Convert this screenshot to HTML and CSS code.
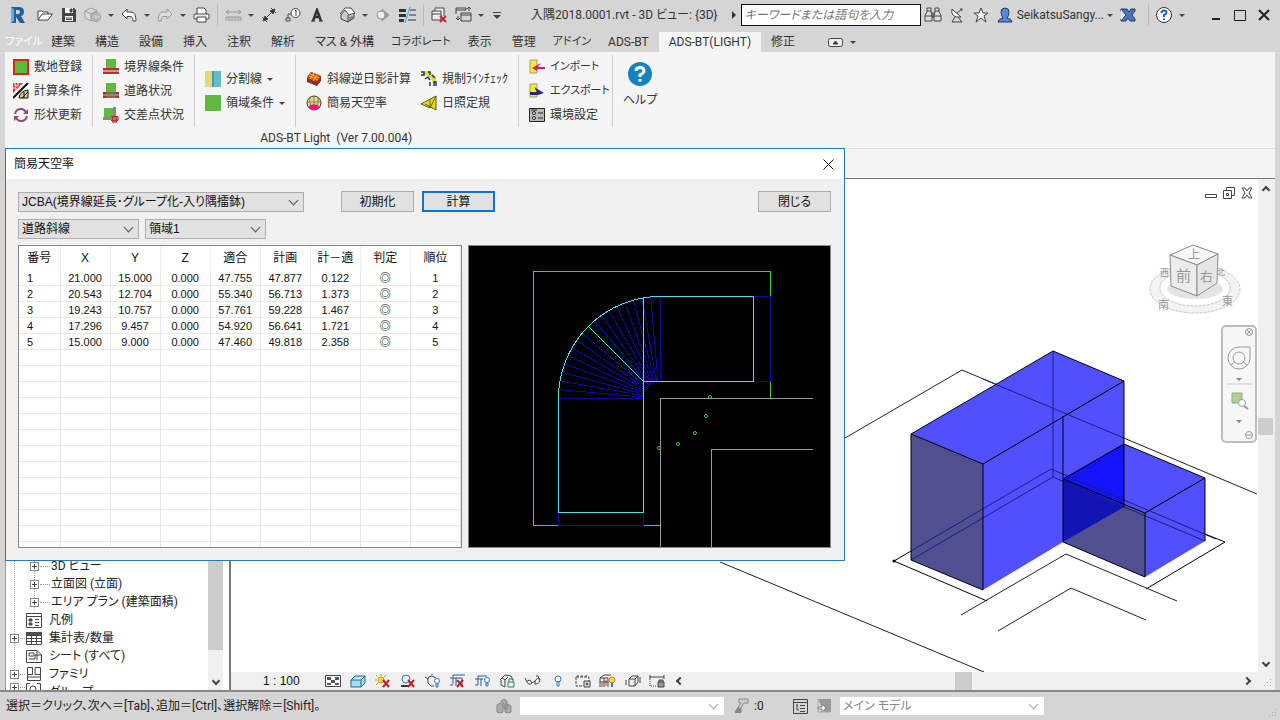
FILE: index.html
```html
<!DOCTYPE html>
<html lang="ja">
<head>
  <meta charset="UTF-8" />
  <meta name="viewport" content="width=device-width, initial-scale=1.0"/>
  <title>入隅2018.0001.rvt - 3D ビュー: {3D}</title>
  <link rel="stylesheet" href="styles.css">
</head>
<body>
  <header class="titlebar">
    <span class="app-logo"><svg width="18" height="18" viewBox="0 0 18 18"><path d="M3 1H11Q16 1 16 6Q16 9 13 10L17 17H12L8 11V17H3Z" fill="#1f5f9e"/><path d="M3 1L6 3V15L3 17Z" fill="#69a8dc"/><path d="M8 4H10Q12 4 12 6Q12 8 10 8H8Z" fill="#d5d5d5"/></svg></span>
    <button class="tool" aria-label="開く"><svg width="16" height="16" viewBox="0 0 16 16" class="line"><path d="M1 13V4H5L6 5H11V7M1 13L5 7H15.500L11 13Z" fill="#fff"/></svg></button>
    <button class="tool" aria-label="保存"><svg width="16" height="16" viewBox="0 0 16 16"><path d="M1 1H13L15 3V15H1Z" fill="#444"/><path d="M4 1H12V6H4ZM4 9H12V14H4Z" fill="#fff"/><path d="M9 2H11V5H9ZM5 11H11M5 12.500H11" stroke="#444" fill="#444"/></svg></button>
    <button class="tool" aria-label="同期"><svg width="18" height="16" viewBox="0 0 18 16" class="muted"><path d="M1 4L7 1L13 4V11L7 14L1 11ZM1 4L7 7L13 4M7 7V14" fill="#ddd"/><circle cx="12" cy="10" r="4.500" fill="#ccc"/><path d="M10 10A2 2 0 0 1 14 9M14 11A2 2 0 0 1 10 11"/></svg></button>
    <button class="drop" aria-label="同期メニュー"></button>
    <button class="tool" aria-label="元に戻す"><svg width="16" height="14" viewBox="0 0 16 14" class="line"><path d="M1 6L6 1V4H10Q15 4 15 13H12Q12 8.500 9 8.500H6V11Z" fill="#fff"/></svg></button>
    <button class="drop" aria-label="元に戻すメニュー"></button>
    <button class="tool" aria-label="やり直し"><svg width="16" height="14" viewBox="0 0 16 14" class="muted"><path d="M15 6L10 1V4H6Q1 4 1 13H4Q4 8.500 7 8.500H10V11Z" fill="#ddd"/></svg></button>
    <button class="drop" aria-label="やり直しメニュー"></button>
    <button class="tool" aria-label="印刷"><svg width="17" height="16" viewBox="0 0 17 16" class="line"><path d="M4 7V1H11L13 3V7" fill="#fff"/><rect x="1" y="7" width="15" height="5" rx="1" fill="#eee"/><path d="M4 10H13V15H4Z" fill="#fff"/></svg></button>
    <span class="sep"></span>
    <button class="tool" aria-label="計測"><svg width="17" height="12" viewBox="0 0 17 12" class="muted"><path d="M1 3H16M4 1L1 3L4 5M13 1L16 3L13 5M1 8H16V11H1ZM4 8V10M7 8V10M10 8V10M13 8V10"/></svg></button>
    <button class="drop" aria-label="計測メニュー"></button>
    <button class="tool" aria-label="寸法"><svg width="16" height="16" viewBox="0 0 16 16" class="line"><path d="M3 13L13 3M1 10L6 15M10 1L15 6"/><path d="M2 14L4 9L7 12ZM14 2L9 4L12 7Z" fill="#333"/></svg></button>
    <button class="tool" aria-label="タグ"><svg width="16" height="14" viewBox="0 0 16 14" class="line"><circle cx="10.500" cy="5" r="4.500" fill="#fff"/><path d="M6 6H3V10M10 3L11 2V8M1 10H5V13H1Z"/></svg></button>
    <button class="tool" aria-label="文字"><svg width="14" height="14" viewBox="0 0 14 14"><path d="M3 13L7 2L11 13M4 9H10" fill="none" stroke="#333" stroke-width="2.500"/><path d="M1 13H5M9 13H13" stroke="#333" stroke-width="1"/></svg></button>
    <button class="tool spaced" aria-label="3D ビュー"><svg width="17" height="16" viewBox="0 0 17 16" class="line"><path d="M2 7V12L9 15L15 11V6" fill="#ccc"/><path d="M1 7L6 1H12L16 6L10 8L6 3L2 8" fill="#fff"/><path d="M9 8V15M11 10V13.500M13 9V12"/></svg></button>
    <button class="drop" aria-label="3D ビューメニュー"></button>
    <button class="tool" aria-label="断面"><svg width="16" height="14" viewBox="0 0 16 14" class="muted"><path d="M7 1L14 7L7 13Z" fill="#999"/><circle cx="6" cy="7" r="4" fill="#eee"/></svg></button>
    <button class="tool" aria-label="細線"><svg width="17" height="16" viewBox="0 0 17 16"><path d="M0 2H7V5H0ZM0 7H7V10H0ZM0 12H5V15H0Z" fill="#333"/><path d="M11 3H17M10 8H17M9 13H17" stroke="#333"/><path d="M11 0L6 16" stroke="#35a0e0"/></svg></button>
    <span class="sep"></span>
    <button class="tool" aria-label="非表示を閉じる"><svg width="16" height="16" viewBox="0 0 16 16" class="line"><path d="M4 4V1H13V9M1 4H10V13H1ZM1 7H10" fill="#eee"/><path d="M9 9L15 15M15 9L9 15" stroke="#c3272d" stroke-width="2"/></svg></button>
    <button class="tool" aria-label="ウィンドウ切り替え"><svg width="17" height="16" viewBox="0 0 17 16" class="line"><path d="M1 7V1H11V3M1 3H11M6 6H16V14H6ZM6 8H16M14 4V1M12 2L14 0L16 2M3 9V13M1 11L3 13L5 11"/></svg></button>
    <button class="drop" aria-label="ウィンドウメニュー"></button>
    <button class="drop wide" aria-label="クイックアクセスのカスタマイズ"></button>
    <h1 class="doc-title">入隅2018.0001.rvt - 3D ビュー: {3D}</h1>
    <span class="expand"></span>
    <input class="search" type="text" aria-label="検索" placeholder="キーワードまたは語句を入力">
    <button class="tool" aria-label="検索する"><svg width="18" height="16" viewBox="0 0 18 16" class="line"><path d="M3 1H7V5L8 8V14H1V8L3 5ZM11 1H15V5L17 8V14H10V8L11 5ZM8 6H10V10H8ZM1 9H8M10 9H17M3 4H7M11 4H15" fill="#ddd"/></svg></button>
    <button class="tool" aria-label="通信センター"><svg width="16" height="16" viewBox="0 0 16 16" class="line"><path d="M3 2Q1 11 12 10Z" fill="#fff"/><path d="M8 6L13 2M11 2H13V4M6 10L3 15H13L9 10"/></svg></button>
    <button class="tool" aria-label="お気に入り"><svg width="16" height="16" viewBox="0 0 16 16" class="line"><path d="M8 1L10 6H15L11 9L13 15L8 11L3 15L5 9L1 6H6Z" fill="#f4f4f4"/></svg></button>
    <button class="tool" aria-label="サインイン"><svg width="16" height="16" viewBox="0 0 16 16"><path d="M1 15Q1 12 6 11Q4 8 4 5Q4 1 8 1Q12 1 12 5Q12 8 10 11Q15 12 15 15Z" fill="#5d86d6" stroke="#27386b"/></svg></button>
    <a class="user" href="#">SeikatsuSangy...</a>
    <button class="drop" aria-label="アカウントメニュー"></button>
    <button class="tool exchange" aria-label="Exchange"><svg width="16" height="14" viewBox="0 0 16 14"><path d="M1 1H7L9 4L11 1H15V3L12 7L15 11V13H10L8 10L6 13H1V11L4 7L1 3Z" fill="#4d74c0" stroke="#27386b"/><path d="M1 1L6 7L1 13" fill="#dfe8f8" stroke="#27386b"/></svg></button>
    <span class="sep"></span>
    <button class="tool" aria-label="ヘルプ"><svg width="18" height="18" viewBox="0 0 18 18"><circle cx="9" cy="9" r="7.500" fill="#fff" stroke="#333"/><path d="M6.500 7Q6.500 4.500 9 4.500Q11.500 4.500 11.500 6.500Q11.500 8 9 9V11M9 12.500V14" fill="none" stroke="#1f62c4" stroke-width="2"/></svg></button>
    <button class="drop" aria-label="ヘルプメニュー"></button>
    <span class="window-buttons">
      <button class="tool" aria-label="最小化"><svg width="12" height="12" viewBox="0 0 12 12"><path d="M2 10H10" stroke="#222" stroke-width="2"/></svg></button>
      <button class="tool" aria-label="最大化"><svg width="12" height="12" viewBox="0 0 12 12"><path d="M.500 1.500H11.500V11.500H.500Z" fill="none" stroke="#222"/></svg></button>
      <button class="tool" aria-label="閉じる"><svg width="12" height="12" viewBox="0 0 12 12"><path d="M1 1L11 11M11 1L1 11" stroke="#222" stroke-width="2"/></svg></button>
    </span>
  </header>

  <nav class="tabs">
    <a class="file" href="#">ファイル</a>
    <a href="#">建築</a>
    <a href="#">構造</a>
    <a href="#">設備</a>
    <a href="#">挿入</a>
    <a href="#">注釈</a>
    <a href="#">解析</a>
    <a href="#">マス &amp; 外構</a>
    <a class="kana" href="#">コラボレート</a>
    <a href="#">表示</a>
    <a href="#">管理</a>
    <a class="kana" href="#">アドイン</a>
    <a href="#">ADS-BT</a>
    <a class="active" href="#">ADS-BT(LIGHT)</a>
    <a href="#">修正</a>
    <button class="tool ribbon-toggle" aria-label="リボンの表示"><svg width="15" height="9" viewBox="0 0 15 9" class="line"><rect x=".500" y=".500" width="14" height="8" rx="2" fill="#eee"/><path d="M5 6L7.500 3L10 6Z" fill="#333"/></svg></button>
    <button class="drop" aria-label="リボンメニュー"></button>
  </nav>

  <section class="ribbon">
    <div class="panel">
      <div class="groups">
        <div class="group">
          <button><svg width="16" height="16" viewBox="0 0 16 16"><rect x="1" y="1" width="14" height="14" fill="#5abe3d" stroke="#e0251b" stroke-width="2"/></svg>敷地登録</button>
          <button><svg width="16" height="16" viewBox="0 0 16 16"><path d="M0 0H10L0 10Z" fill="#e5322c"/><path d="M2 0V3H5V0M0 5H3V8M7 2L9 4" stroke="#fff" fill="none"/><path d="M0 15L15 0" stroke="#111" stroke-width="2"/><path d="M6 15Q7 8 15 7V15Z" fill="#d9cf84" stroke="#111"/><path d="M9 15L15 9M11 9V15" stroke="#111"/></svg>計算条件</button>
          <button><svg width="16" height="16" viewBox="0 0 16 16"><path d="M2 7Q3 2 8 2Q11 2 13 5M14 9Q13 14 8 14Q5 14 3 11" fill="none" stroke="#8f4b73" stroke-width="2"/><path d="M15 2V7H10ZM1 14V9H6Z" fill="#8f4b73"/></svg>形状更新</button>
        </div>
        <div class="group">
          <button><svg width="16" height="16" viewBox="0 0 16 16"><path d="M3 0H13V9H3Z" fill="#5abe3d"/><path d="M0 9H16V11H0ZM0 13H16V15H0Z" fill="#cf2230"/><path d="M0 11H16V13H0Z" fill="#aaa"/></svg>境界線条件</button>
          <button><svg width="16" height="16" viewBox="0 0 16 16"><path d="M3 0H13V9H3Z" fill="#5abe3d"/><path d="M0 9H16V15H0Z" fill="#888"/><path d="M2 10H14M2 14H14" stroke="#c22"/><path d="M0 9H3V11H0ZM13 9H16V11H13ZM0 13H3V15H0ZM13 13H16V15H13Z" fill="#c22"/></svg>道路状況</button>
          <button><svg width="16" height="16" viewBox="0 0 16 16"><path d="M1 1H10V10H1Z" fill="#5abe3d"/><path d="M0 10H16V13H0ZM10 0H13V16H10Z" fill="#888"/><path d="M9.500 9V15.500M13.500 9V15.500M8 9.500H15M8 13.500H15" stroke="#c22"/></svg>交差点状況</button>
        </div>
        <div class="group center">
          <button><svg width="16" height="16" viewBox="0 0 16 16"><path d="M0 0H7V16H0Z" fill="#e2d67e"/><path d="M7 0H16V16H7Z" fill="#5fc0be"/><path d="M7 0H9V16H7Z" fill="#5790c0"/></svg>分割線<i></i></button>
          <button><svg width="16" height="16" viewBox="0 0 16 16"><path d="M0 0H16V16H0Z" fill="#5fb942"/></svg>領域条件<i></i></button>
        </div>
        <div class="group center double">
          <button><svg width="16" height="16" viewBox="0 0 16 16"><path d="M5 1L15 5V10L11 15L1 11V6Z" fill="#7b3325"/><path d="M5 1L15 5L11 11L1 7Z" fill="#ef3c16"/><path d="M4 3L13 7M3 5L12 9M8 2L4 8M11 4L7 10" stroke="#f3cc2e"/></svg>斜線逆日影計算</button>
          <button><svg width="16" height="16" viewBox="0 0 16 16"><circle cx="8" cy="8" r="7" fill="#dedb85" stroke="#333"/><path d="M3 13Q3 9 6 10Q8 8 10 10Q13 9 13 13Q8 17 3 13Z" fill="#ed1689"/><path d="M8 1V10M1 7H15M4 3Q3 8 5 10M12 3Q13 8 11 10" fill="none" stroke="#8a884f"/></svg>簡易天空率</button>
          <button><svg width="16" height="16" viewBox="0 0 16 16"><path d="M2 3L7 2L12 6L14 12" stroke="#e9dc19" stroke-width="4" fill="none"/><path d="M0 1H3V4H0M7 1H9V4M4 8L7 6L9 9M9 15V11M13 15V11H15V15M11 4L14 7" fill="none" stroke="#23337a" stroke-width="1.500"/></svg>規制ﾗｲﾝﾁｪｯｸ</button>
          <button><svg width="16" height="16" viewBox="0 0 16 16"><path d="M0 9L15 1V15Z" fill="#e5dc18"/><path d="M0 9L15 1L9 13ZM15 1V15L4 9M9 5V13" fill="none" stroke="#5e5b19"/></svg>日照定規</button>
        </div>
        <div class="group kana">
          <button><svg width="16" height="16" viewBox="0 0 16 16"><path d="M1 1H8V14H1Z" fill="#ffed1d" stroke="#999"/><path d="M16 10H8V12L3 9L12 4L9 8H16Z" fill="#d61a73"/></svg>インポート</button>
          <button><svg width="16" height="16" viewBox="0 0 16 16"><path d="M1 1H8V14H1Z" fill="#ffed1d" stroke="#999"/><path d="M1 9H8L5 4L15 10L9 12H1Z" fill="#25287f"/></svg>エクスポート</button>
          <button><svg width="16" height="16" viewBox="0 0 16 16"><path d="M.500 1.500H15.500V14.500H.500Z" fill="#bbb" stroke="#222"/><path d="M9 6H14M9 11H14M2 3H8" stroke="#222"/><circle cx="5" cy="6" r="1.500" fill="#eee" stroke="#222"/><circle cx="5" cy="11" r="1.500" fill="#eee" stroke="#222"/></svg><span class="label">環境設定</span></button>
        </div>
        <div class="group help">
          <button><svg width="24" height="24" viewBox="0 0 24 24"><circle cx="12" cy="12" r="12" fill="#1583bd"/><path d="M8 9Q8 5.500 12 5.500Q16 5.500 16 9Q16 11 12 13V15M12 17V19.500" fill="none" stroke="#fff" stroke-width="3"/></svg>ヘルプ</button>
        </div>
      </div>
      <div class="panel-title">ADS-BT Light&nbsp; (Ver 7.00.004)</div>
    </div>
  </section>
  <div class="options-bar"></div>

  <main class="workspace">
    <aside class="browser">
      <ul class="tree">
        <li class="child"><b></b>3D ビュー</li>
        <li class="child"><b></b>立面図 (立面)</li>
        <li class="child"><b></b>エリア プラン (建築面積)</li>
        <li class="leaf"><svg width="16" height="15" viewBox="0 0 16 15" class="line"><path d="M.500 .500H15.500V14.500H.500ZM.500 3.500H15.500M9 6.500H13M9 9.500H13M9 12.500H13"/><path d="M3 6H6V8H3ZM3 10H6V12H3Z" fill="#555"/></svg>凡例</li>
        <li><b></b><svg width="16" height="13" viewBox="0 0 16 13" class="line"><path d="M.500 .500H15.500V12.500H.500ZM.500 3.500H15.500M.500 6.500H15.500M.500 9.500H15.500M5.500 3V12M10.500 3V12"/><path d="M0 0H16V3H0Z" fill="#555"/></svg>集計表/数量</li>
        <li class="leaf"><svg width="16" height="13" viewBox="0 0 16 13" class="line"><path d="M.500 .500H11L15.500 5V12.500H.500ZM3 3H8V6H3ZM3 9H9V5H11V10M11 1V5H15"/></svg>シート (すべて)</li>
        <li><b></b><svg width="16" height="14" viewBox="0 0 16 14" class="line"><path d="M1.500 .500H6.500V7.500H1.500ZM9 .500H14.500V7.500H9ZM1.500 10H14.500M1.500 7.500V13.500H14.500V7.500"/></svg>ファミリ</li>
        <li class="cut"><b></b><svg width="16" height="14" viewBox="0 0 16 14" class="line"><path d="M4 .500H.500V13.500M11 .500H14.500V13.500"/><circle cx="7" cy="6" r="3"/></svg>グループ</li>
      </ul>
      <div class="scroll-y browser-scroll"><span class="thumb"></span><span class="chev down"></span></div>
    </aside>

    <div class="view">
      <div class="canvas">
        <svg class="model" viewBox="231 179 1027 493" preserveAspectRatio="xMaxYMin meet">
          <g fill="none" stroke="#222" stroke-width="1">
            <path d="M720 562L984 672M845 438L962 370L1257 494"/>
            <path d="M961 615L1066 554L1177 601M998 631L1071 588L1146 620"/>
          </g>
          <path d="M911 434L1053 351L1124 381V507L1063 542L983 590V464Z" fill="#5050ff"/>
          <path d="M911 434L983 464V590L911 560Z" fill="#505090"/>
          <path d="M1124 444L1205 478V541L1145 577V513L1063 479Z" fill="#5050ff"/>
          <path d="M1063 479L1145 513V577L1063 542Z" fill="#505090"/>
          <path d="M1063 479L1124 444V507Z" fill="#1414ff"/>
          <path d="M1063 479L1124 507L1063 542Z" fill="#1414b4"/>
          <g fill="none" stroke="#1c1c80">
            <path d="M1053 351V477L911 560M1053 477L1205 541M911 551L1051 469L1216 539M983 379L1124 438"/>
          </g>
          <g fill="none" stroke="#000" stroke-width="1">
            <path d="M911 434L1053 351L1124 381V507M911 434L983 464L1124 381M911 434V560L983 590V464M1063 416V542L1145 577V513L1063 479L1124 444L1205 478L1145 513M1205 478V541"/>
            <path d="M911 551L894 561L987 601M1205 534L1225 542L1146 589"/>
          </g>
          <circle cx="894" cy="561" r="1.500"/>
        </svg>
        <div class="mdi">
          <button aria-label="ビューを最小化"><svg width="12" height="12" viewBox="0 0 12 12" class="line"><path d="M.500 7.500H11.500V10.500H.500Z" fill="#fff"/></svg></button>
          <button aria-label="ビューを元に戻す"><svg width="12" height="12" viewBox="0 0 12 12" class="line"><path d="M3.500 3V.500H11.500V8.500H9M.500 3.500H8.500V11.500H.500ZM3.500 6.500H5.500V8.500H3.500Z" fill="#fff"/></svg></button>
          <button aria-label="ビューを閉じる"><svg width="12" height="12" viewBox="0 0 12 12" class="line"><path d="M1 1H4L6 4L8 1H11L8 6L11 11H8L6 8L4 11H1L4 6Z" fill="#fff"/></svg></button>
        </div>
        <svg class="viewcube" width="92" height="74" viewBox="0 0 92 74">
          <ellipse cx="46" cy="45" rx="45" ry="24" fill="#f3f3f3" stroke="#c6c6c6" stroke-dasharray="3 1"/>
          <ellipse cx="46" cy="44" rx="35" ry="18" fill="#fff" stroke="#c6c6c6" stroke-dasharray="3 1"/>
          <ellipse cx="46" cy="45" rx="28" ry="10" fill="#e4e4e4"/>
          <g class="cube-text">
            <text x="11" y="32" font-size="9">西</text>
            <text x="68" y="31" font-size="8">北</text>
            <text x="9" y="65" font-size="11">南</text>
            <text x="73" y="61" font-size="11">東</text>
          </g>
          <path d="M21 11L44 1L69 10L48 21Z" fill="#f7f7f7" stroke="#8a8a8a"/>
          <path d="M21 11L48 21V52L22 42Z" fill="#ececec" stroke="#8a8a8a"/>
          <path d="M69 10L48 21V52L68 39Z" fill="#e6e6e6" stroke="#8a8a8a"/>
          <g class="cube-text">
            <text x="39" y="15" font-size="12">上</text>
            <text x="27" y="37" font-size="15">前</text>
            <text x="51" y="37" font-size="13">右</text>
          </g>
        </svg>
        <div class="navbar">
          <svg width="32" height="114" viewBox="1 0 32 114" fill="none" stroke="#999">
            <circle cx="27" cy="5" r="3.500"/><path d="M25 3L29 7M29 3L25 7"/>
            <path d="M17 20H28V31A11 11 0 1 1 17 20Z"/><circle cx="17" cy="31" r="6"/><path d="M9 38L13 35M25 38L21 35"/>
            <path d="M14 51H20L17 54ZM14 93H20L17 96Z" fill="#888" stroke="none"/>
            <path d="M5 57H30" stroke="#ccc"/>
            <path d="M10 66H20V76H10Z" fill="#b2ce9c" stroke="#8fad7c"/><circle cx="20" cy="76" r="3.500" fill="#fff"/><path d="M22 79L26 82" stroke-width="2"/>
            <circle cx="27" cy="108" r="3.500"/><path d="M24 108H30"/>
          </svg>
        </div>
      </div>
      <div class="scroll-y view-scroll"><span class="chev up"></span><span class="thumb"></span><span class="chev down"></span></div>
      <div class="view-bar">
        <span class="scale">1 : 100</span>
        <button aria-label="詳細レベル"><svg width="16" height="12" viewBox="0 0 16 12"><path d="M.500 .500H15.500V11.500H.500Z" fill="#fff" stroke="#444"/><path d="M2 2H6V5H2ZM10 2H14V5H10ZM6 5H10V8H6ZM2 8H6V10H2ZM10 8H14V10H10Z" fill="#555"/></svg></button>
        <button aria-label="表示スタイル"><svg width="16" height="13" viewBox="0 0 16 13"><path d="M1 5L5 1H15V8L11 12H1ZM1 5H11L15 1M11 5V12" fill="#a8dbf4" stroke="#1b6d9c"/></svg></button>
        <button aria-label="太陽の位置"><svg width="16" height="14" viewBox="0 0 16 14"><circle cx="6" cy="6" r="3" fill="#ffd83b" stroke="#c99a12"/><path d="M6 0V2M1 1L2.500 2.500M0 6H2M1 11L3 9M11 1L9 3" stroke="#c99a12"/><path d="M8 6L14 13M14 6L8 13" stroke="#b8202a" stroke-width="2"/></svg></button>
        <button aria-label="影"><svg width="16" height="14" viewBox="0 0 16 14"><circle cx="6" cy="5" r="4" fill="#e7f2fb" stroke="#2d79bd"/><path d="M1 12H8" stroke="#333" stroke-width="2"/><path d="M8 6L14 13M14 6L8 13" stroke="#b8202a" stroke-width="2"/></svg></button>
        <button aria-label="レンダリング"><svg width="17" height="14" viewBox="0 0 17 14" class="line"><path d="M1 3L4 5Q4 2 8 2L12 4M4 5V9L7 12H10M7 0H9" fill="#eee"/><circle cx="13" cy="7" r="2.500" stroke="#2d79bd" fill="#fff"/><path d="M12 10H14V13H12Z" stroke="#2d79bd"/></svg></button>
        <button aria-label="トリミング"><svg width="17" height="14" viewBox="0 0 17 14"><path d="M4 1H16M4 1V10M1 4H13V13M1 11H4M7 4V12" fill="none" stroke="#2d5f93"/><path d="M8 6L14 13M14 6L8 13" stroke="#b8202a" stroke-width="2"/></svg></button>
        <button aria-label="トリミング領域"><svg width="17" height="14" viewBox="0 0 17 14" fill="none" stroke="#2d5f93"><path d="M4 11V2H13M1 5H9M7 5V12M1 11H4"/><circle cx="13" cy="6" r="2.500" stroke="#2d79bd" fill="#fff"/><path d="M12 9H14V12H12Z" stroke="#2d79bd"/></svg></button>
        <button aria-label="3D ビューのロック"><svg width="17" height="14" viewBox="0 0 17 14" class="line"><path d="M1 6L6 1L12 2L14 6M2 6V11L6 13V6L3 4M6 6L9 3" fill="#eee"/><path d="M9 8H15V13H9ZM10 8V5H14V8" stroke="#2b8071"/></svg></button>
        <button aria-label="一時的に非表示"><svg width="17" height="12" viewBox="0 0 17 12" class="line"><path d="M1 3L3 7Q5 11 8 8L6 5L3 6M8 8L11 6Q13 2 16 4Q16 9 11 9V6M12 1H14L15 4"/></svg></button>
        <button aria-label="非表示要素"><svg width="10" height="14" viewBox="0 0 10 14"><circle cx="5" cy="5" r="3" fill="#fff" stroke="#2d79bd"/><path d="M4 8H6V12H4Z" fill="#fff" stroke="#2d79bd"/></svg></button>
        <button aria-label="ビュープロパティ"><svg width="16" height="14" viewBox="0 0 16 14" class="line"><path d="M1 3H14V7M1 3V12H8M3 1V3M7 1V3M11 1V3" stroke-dasharray="3 1"/><path d="M9 7H15V13H9Z" fill="#ddd"/><circle cx="12" cy="10" r="1"/></svg></button>
        <button aria-label="解析モデル"><svg width="17" height="14" viewBox="0 0 17 14" class="line"><path d="M1 4L5 1H12M1 4V13M5 4V13M9 4V13M1 8H9M1 4H9"/><path d="M3 9V13M7 6V12" stroke="#c3272d"/><circle cx="13" cy="6" r="3" fill="#ffd65c" stroke="#c88414"/><path d="M13 9V13" stroke="#2d79bd" stroke-width="2"/></svg></button>
        <button aria-label="変位セット"><svg width="16" height="14" viewBox="0 0 16 14" class="line"><path d="M4 5L7 2H13V8L10 12H4ZM4 5H10L13 2M10 5V12M1 6V11M15 3V9" fill="#eee"/></svg></button>
        <button aria-label="拘束"><svg width="17" height="14" viewBox="0 0 17 14" class="line"><path d="M1 3H15M1 1V5M15 1V5"/><path d="M1 5V12H8" stroke-dasharray="1 1"/><path d="M9 8H15V13H9ZM10 8V6H14V8" fill="#999"/></svg></button>
        <span class="chev left"></span>
        <div class="scroll-x"><span class="thumb"></span></div>
        <span class="chev right"></span>
      </div>
      <span class="grip"></span>
    </div>
  </main>

  <footer class="status">
    <span class="message">選択＝クリック、次へ＝[Tab]、追加＝[Ctrl]、選択解除＝[Shift]。</span>
    <svg class="workset" width="16" height="16" viewBox="0 0 16 16"><path d="M1 7L4 5L7 7V14L4 15L1 14ZM5 3L8 1L11 3V11H8V6L5 4ZM9 8L12 6L15 8V14L12 15L9 14Z" fill="#aaa" stroke="#888"/></svg>
    <span class="pick"><select aria-label="ワークセット" disabled><option></option></select></span>
    <svg class="filter" width="16" height="16" viewBox="0 0 16 16"><path d="M5 1H14V5H10L7 10V14H1L5 8L7 5H5Z" fill="#ccc" stroke="#888"/><path d="M1 14L4 9L7 10V15H1Z" fill="#888"/></svg>
    <span class="count">:0</span>
    <button class="tool" aria-label="デザイン オプション"><svg width="15" height="16" viewBox="0 0 15 16" class="line"><path d="M.500 1.500H14.500V15.500H.500ZM.500 4.500H14.500M7 7.500H12M7 10.500H12M7 13.500H12M3 7H5M4 7V12H6"/></svg></button>
    <button class="tool add" aria-label="オプションに追加"><svg width="14" height="16" viewBox="0 0 14 16"><path d="M1 1H14V14H7Z" fill="#999"/><path d="M1 1V14H13" fill="none" stroke="#aaa"/><path d="M1 9H5V6L9 10L5 14V11H1Z" fill="#eee" stroke="#888"/></svg></button>
    <span class="pick"><select aria-label="モデル" disabled><option>メイン モデル</option></select></span>
    <span class="grip"></span>
  </footer>

  <section class="dialog" role="dialog" aria-labelledby="dialogTitle">
    <div class="dialog-title">
      <h2 id="dialogTitle">簡易天空率</h2>
      <button aria-label="閉じる"><svg width="11" height="11" viewBox="0 0 11 11"><path d="M.500 .500L10.500 10.500M10.500 .500L.500 10.500" stroke="#111"/></svg></button>
    </div>
    <div class="dialog-body">
      <div class="row">
        <span class="pick large"><select aria-label="算定方式"><option>JCBA(境界線延長･グループ化-入り隅擂鉢)</option></select></span>
        <button class="btn reset">初期化</button>
        <button class="btn primary">計算</button>
        <button class="btn close">閉じる</button>
      </div>
      <div class="row">
        <span class="pick"><select aria-label="斜線種別"><option>道路斜線</option></select></span>
        <span class="pick"><select aria-label="領域"><option>領域1</option></select></span>
      </div>
      <div class="results">
        <div class="list">
          <table>
            <thead>
              <tr><th>番号</th><th>X</th><th>Y</th><th>Z</th><th>適合</th><th>計画</th><th>計－適</th><th>判定</th><th>順位</th></tr>
            </thead>
            <tbody>
              <tr><td>1</td><td>21.000</td><td>15.000</td><td>0.000</td><td>47.755</td><td>47.877</td><td>0.122</td><td>◎</td><td>1</td></tr>
              <tr><td>2</td><td>20.543</td><td>12.704</td><td>0.000</td><td>55.340</td><td>56.713</td><td>1.373</td><td>◎</td><td>2</td></tr>
              <tr><td>3</td><td>19.243</td><td>10.757</td><td>0.000</td><td>57.761</td><td>59.228</td><td>1.467</td><td>◎</td><td>3</td></tr>
              <tr><td>4</td><td>17.296</td><td>9.457</td><td>0.000</td><td>54.920</td><td>56.641</td><td>1.721</td><td>◎</td><td>4</td></tr>
              <tr><td>5</td><td>15.000</td><td>9.000</td><td>0.000</td><td>47.460</td><td>49.818</td><td>2.358</td><td>◎</td><td>5</td></tr>
            </tbody>
          </table>
        </div>
        <div class="plan">
          <svg viewBox="469 246 361 301" fill="none">
            <path d="M660 525.500H533.500V271.500H770.500V398" stroke="#4fc84f"/>
            <path d="M813 398.500H660.500V547M813 449.500H711.500V547" stroke="#999"/>
            <g stroke="#0c0ca0">
              <path d="M753 296.500H770.500V381.500H753M558.500 512V525.500H643.500V512M660.500 296V381M643 398A17 17 0 0 1 660 381"/>
              <path id="ray" d="M558.500 398.500H643"/>
              <use href="#ray" transform="rotate(5 660 398)"/>
              <use href="#ray" transform="rotate(10 660 398)"/>
              <use href="#ray" transform="rotate(15 660 398)"/>
              <use href="#ray" transform="rotate(20 660 398)"/>
              <use href="#ray" transform="rotate(25 660 398)"/>
              <use href="#ray" transform="rotate(30 660 398)"/>
              <use href="#ray" transform="rotate(35 660 398)"/>
              <use href="#ray" transform="rotate(40 660 398)"/>
              <use href="#ray" transform="rotate(50 660 398)"/>
              <use href="#ray" transform="rotate(55 660 398)"/>
              <use href="#ray" transform="rotate(60 660 398)"/>
              <use href="#ray" transform="rotate(65 660 398)"/>
              <use href="#ray" transform="rotate(70 660 398)"/>
              <use href="#ray" transform="rotate(75 660 398)"/>
              <use href="#ray" transform="rotate(80 660 398)"/>
              <use href="#ray" transform="rotate(85 660 398)"/>
            </g>
            <path d="M643.500 381.500V512.500H558.500V398A102 102 0 0 1 660 296.500H753.500V381.500H643.500V298M643.500 381.500L588.500 326.500" stroke="#55dcea"/>
            <g class="points" stroke="#4fc84f">
              <circle cx="710" cy="397" r="1.500"/><circle cx="706" cy="416" r="1.500"/><circle cx="695" cy="433" r="1.500"/><circle cx="678" cy="444" r="1.500"/><circle cx="659" cy="448" r="1.500"/>
            </g>
          </svg>
        </div>
      </div>
    </div>
  </section>
</body>
</html>
```
FILE: styles.css
```css
* {
  box-sizing: border-box;
}
body {
  display: flex;
  flex-direction: column;
  min-height: 100vh;
  margin: 0;
  position: relative;
  background: #d5d5d5;
  color: #333;
  font-family: Roboto, 'Noto Sans CJK JP', sans-serif;
  font-size: 12px;
  line-height: 18px;
  font-feature-settings: "palt";
}
button, input, select {
  font: inherit;
  font-feature-settings: inherit;
  color: inherit;
}
button {
  padding: 0;
  border: none;
  background: none;
}
a {
  color: inherit;
  text-decoration: none;
}
svg {
  display: block;
  flex: none;
}
.line {
  fill: none;
  stroke: #444;
}
.muted {
  fill: none;
  stroke: #999;
}

/* title bar */
.titlebar {
  display: flex;
  align-items: center;
  height: 30px;
  padding-right: 4px;
  white-space: nowrap;
}
.app-logo {
  flex: none;
  width: 33px;
  padding-left: 8px;
}
.tool {
  display: flex;
  flex: none;
  align-items: center;
  justify-content: center;
  width: 24px;
  height: 24px;
}
.spaced {
  margin-left: 6px;
}
.exchange {
  margin-right: 4px;
}
.drop {
  display: flex;
  flex: none;
  flex-direction: column;
  align-items: center;
  justify-content: center;
  width: 12px;
  height: 24px;
}
.drop::after, .group i {
  content: "";
  border: 3px solid transparent;
  border-top-color: #444;
  border-bottom: none;
}
.drop.wide {
  width: 20px;
}
.drop.wide::before {
  content: "";
  width: 8px;
  height: 1px;
  margin-bottom: 2px;
  background: #444;
}
.drop.wide::after {
  border-width: 4px 4px 0;
}
.sep {
  flex: none;
  width: 8px;
  height: 22px;
  background: linear-gradient(#bbb, #bbb) center / 1px 100% no-repeat;
}
.doc-title {
  flex: 1;
  margin: 0 0 0 24px;
  font-size: 12px;
  font-weight: normal;
}
.expand {
  margin-right: 5px;
  border: 4px solid transparent;
  border-left-color: #333;
  border-right: none;
}
.search {
  width: 180px;
  height: 22px;
  padding: 0 3px;
  border: 1px solid #111;
  border-radius: 0;
  background: #fff;
}
.search::placeholder {
  color: #777;
  font-style: italic;
}
.user {
  min-width: 84px;
}
.window-buttons {
  display: flex;
  margin-left: 16px;
}

/* ribbon */
.tabs {
  display: flex;
  align-items: flex-end;
  height: 22px;
  padding-left: 5px;
  white-space: nowrap;
}
.tabs a {
  height: 20px;
  padding: 0 10px;
  line-height: 20px;
}
.tabs .file {
  width: 36px;
  padding: 0;
  font-size: 11px;
  color: #fff;
}
.tabs .kana {
  padding: 0 7px;
}
.kana {
  font-size: 11px;
}
.kana .label {
  font-size: 12px;
}
.tabs .active {
  background: #f5f5f5;
}
.ribbon-toggle {
  margin-left: 18px;
}
.tabs .tool, .tabs .drop {
  height: 20px;
}
.ribbon {
  display: flex;
  margin: 0 5px;
  background: #f5f5f5;
}
.groups {
  display: flex;
  height: 72px;
  margin: 3px 0 2px;
}
.group {
  display: grid;
  grid-template-rows: repeat(3, 24px);
  align-content: center;
  padding: 0 10px 0 8px;
  border-right: 1px solid #ccc;
}
.group + .group {
  padding-left: 10px;
}
.group.center {
  grid-template-rows: repeat(2, 24px);
}
.group.double {
  grid-auto-flow: column;
  column-gap: 10px;
}
.group.kana {
  padding-right: 2px;
}
.group button {
  display: flex;
  align-items: center;
  gap: 5px;
  white-space: nowrap;
}
.group.help {
  display: flex;
  align-items: flex-start;
  padding-top: 7px;
  border-right: none;
}
.help button {
  flex-direction: column;
}
.panel-title {
  height: 19px;
  text-align: center;
}
.options-bar {
  height: 31px;
  margin: 0 5px;
  border-top: 1px solid #ddd;
  border-bottom: 1px solid #777;
  background: #f5f5f5;
}

/* workspace */
.workspace {
  display: flex;
  flex: 1;
  min-height: 511px;
  margin: 0 5px;
}
.browser {
  display: flex;
  width: 226px;
  padding-right: 6px;
  border-right: 2px solid #777;
  border-left: 1px solid #999;
  background: #fff;
}
.tree {
  flex: 1;
  align-self: flex-end;
  margin: 0;
  padding: 0 0 0 4px;
  list-style: none;
  color: #222;
  background: linear-gradient(#aaa 50%, transparent 50%) 8px 0 / 1px 2px repeat-y;
}
.tree li {
  display: flex;
  align-items: center;
  gap: 7px;
  height: 18px;
  white-space: nowrap;
}
.tree .child {
  gap: 12px;
  padding-left: 20px;
  background: linear-gradient(#aaa 50%, transparent 50%) 24px 0 / 1px 2px repeat-y;
}
.tree .leaf {
  padding-left: 16px;
}
.tree .cut {
  align-items: flex-start;
  height: 7px;
  overflow: hidden;
}
.tree b {
  position: relative;
  flex: none;
  width: 9px;
  height: 9px;
  border: 1px solid #888;
  background:
    linear-gradient(#444, #444) center / 5px 1px no-repeat,
    linear-gradient(#444, #444) center / 1px 5px no-repeat,
    #fff;
}
.tree b::after {
  content: "";
  position: absolute;
  top: 3px;
  left: 9px;
  width: 5px;
  border-top: 1px dotted #999;
}
.tree .child b::after {
  width: 10px;
}
.scroll-y {
  display: flex;
  flex: none;
  flex-direction: column;
  align-items: center;
  width: 15px;
  background: #f0f0f0;
}
.scroll-y .thumb {
  width: 15px;
  background: #cdcdcd;
}
.browser-scroll .thumb {
  flex: 1;
  margin-bottom: 28px;
}
.chev {
  flex: none;
  width: 6px;
  height: 6px;
  border: solid #444;
  border-width: 2px 2px 0 0;
}
.chev.up {
  transform: rotate(-45deg);
}
.chev.down {
  margin-bottom: 6px;
  transform: rotate(135deg);
}
.chev.left {
  transform: rotate(-135deg);
}
.chev.right {
  transform: rotate(45deg);
}
.view {
  display: grid;
  position: relative;
  flex: 1;
  grid-template-columns: 1fr 17px;
  grid-template-rows: 1fr 18px;
  min-width: 0;
  background: #f0f0f0;
}
.canvas {
  position: relative;
  background: #fff;
}
.model {
  width: 100%;
  height: 100%;
}
.mdi {
  display: flex;
  position: absolute;
  top: 8px;
  right: 5px;
  gap: 6px;
}
.viewcube {
  position: absolute;
  top: 65px;
  right: 17px;
}
.cube-text {
  fill: #999;
  font-family: 'Noto Sans CJK JP', sans-serif;
}
.navbar {
  position: absolute;
  top: 146px;
  right: 1px;
  border: 2px solid #bbb;
  border-radius: 5px;
  background: #f7f7f7;
}
.view-scroll {
  padding-top: 8px;
}
.view-scroll .thumb {
  height: 17px;
  margin: 225px 0 auto;
}
.view-bar {
  display: flex;
  grid-column: 1 / -1;
  align-items: center;
  padding-left: 32px;
}
.view-bar .scale {
  width: 57px;
  font-family: 'Liberation Sans', sans-serif;
  color: #111;
}
.view-bar button {
  display: flex;
  flex: none;
  justify-content: center;
  width: 25px;
}
.view-bar .chev.left {
  margin-left: 7px;
}
.scroll-x {
  display: flex;
  flex: 1;
  align-self: stretch;
  justify-content: center;
}
.scroll-x .thumb {
  width: 17px;
  background: #cdcdcd;
}
.view-bar .chev.right {
  margin-right: 25px;
}
.grip {
  position: absolute;
  right: 4px;
  bottom: 4px;
  width: 8px;
  height: 8px;
  background: radial-gradient(#aaa 1px, transparent 1px) 0 0 / 3px 3px;
  clip-path: polygon(100% 0, 100% 100%, 0 100%);
}

/* status bar */
.status {
  display: flex;
  position: relative;
  align-items: center;
  height: 30px;
  padding-left: 6px;
  border-top: 2px solid #888;
  color: #222;
  white-space: nowrap;
}
.message {
  width: 490px;
}
.workset {
  margin-right: 8px;
}
.filter {
  margin-left: 10px;
}
.count {
  width: 38px;
  padding-left: 4px;
}
.status .add {
  margin-right: 4px;
}
.pick {
  display: flex;
  position: relative;
  align-items: center;
  width: 204px;
  height: 18px;
}
.pick::after {
  content: "";
  position: absolute;
  right: 7px;
  width: 6px;
  height: 6px;
  margin-bottom: 3px;
  border: solid #555;
  border-width: 0 1px 1px 0;
  transform: rotate(45deg);
}
.pick select {
  appearance: none;
  width: 100%;
  height: 100%;
  padding: 0 3px;
  border: none;
  border-radius: 0;
  background: #fff;
  line-height: 16px;
}
.status select {
  color: #888;
  opacity: 1;
}
.status .pick::after {
  border-color: #aaa;
}

/* sky factor dialog */
.dialog {
  position: absolute;
  top: 148px;
  left: 5px;
  width: 840px;
  border: 1px solid #2878b4;
  background: #f0f0f0;
  color: #111;
  font-family: 'Liberation Sans', 'Noto Sans CJK JP', sans-serif;
}
.dialog-title {
  display: flex;
  align-items: center;
  justify-content: space-between;
  height: 30px;
  padding: 0 10px 0 8px;
  background: #fff;
}
.dialog-title h2 {
  margin: 0;
  font-size: 12px;
  font-weight: normal;
}
.dialog-body {
  padding: 12px 13px 12px 12px;
}
.row {
  display: flex;
  align-items: center;
  height: 21px;
  margin-bottom: 6px;
}
.dialog .pick {
  width: 121px;
  height: 20px;
  margin-right: 6px;
}
.dialog .pick.large {
  width: 286px;
}
.dialog .pick select {
  border: 1px solid #adadad;
  background: #e1e1e1;
}
.btn {
  width: 73px;
  height: 21px;
  border: 1px solid #adadad;
  background: #e1e1e1;
}
.reset {
  margin: 0 8px 0 31px;
}
.primary {
  border: 2px solid #0f74c4;
}
.close {
  margin-left: auto;
}
.results {
  display: grid;
  grid-template-columns: 444px 1fr;
  gap: 6px;
}
.list {
  border: 1px solid #828790;
  background:
    linear-gradient(#e8e8e8, #e8e8e8) 41px 0 / 1px 100% no-repeat,
    linear-gradient(to right, transparent 49px, #e8e8e8 49px) -8px 0 / 50px 100%,
    linear-gradient(transparent 15px, #e8e8e8 15px) 0 -8px / 100% 16px,
    #fff;
}
.list table {
  width: 100%;
  table-layout: fixed;
  border-collapse: collapse;
}
.list th {
  width: 50px;
  height: 24px;
  padding: 0;
  border-right: 1px solid #eee;
  background: #fff;
  font-weight: normal;
}
.list th:first-child {
  width: 41px;
}
.list td {
  height: 16px;
  padding: 0;
  font-size: 11px;
  line-height: 16px;
  text-align: center;
}
.list td:first-child {
  padding-left: 8px;
  text-align: left;
}
.list td:nth-child(8) {
  font-weight: bold;
}
.plan {
  border: 1px solid #888;
  background: #000;
}
.plan svg {
  width: 100%;
  shape-rendering: crispEdges;
}
.plan .points {
  shape-rendering: auto;
}
```
